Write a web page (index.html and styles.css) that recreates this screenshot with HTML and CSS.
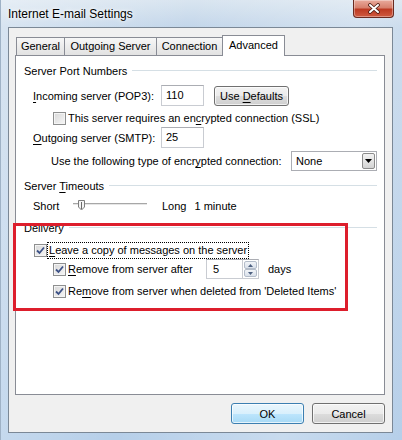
FILE: index.html
```html
<!DOCTYPE html>
<html lang="en">
<head>
    <meta charset="UTF-8">
    <title>Internet E-mail Settings</title>
    <link rel="stylesheet" href="styles.css">
</head>
<body>

    <div class="window">
        <!-- title bar -->
        <div class="titlebar">
            <span class="title">Internet E-mail Settings</span>
            <div class="close">
                <svg width="14" height="11" viewBox="0 0 14 11">
                    <path d="M3 2 L11 9 M11 2 L3 9" stroke="#4a1a12" stroke-width="3.6" stroke-linecap="round"/>
                    <path d="M3 2 L11 9 M11 2 L3 9" stroke="#fff" stroke-width="2" stroke-linecap="round"/>
                </svg>
            </div>
        </div>

        <div class="client">
            <div class="tabs">
                <div class="tab tab-general">General</div>
                <div class="tab tab-outgoing">Outgoing Server</div>
                <div class="tab tab-connection">Connection</div>
                <div class="tab tab-advanced active">Advanced</div>
            </div>

            <div class="pane">
                <!-- Server Port Numbers -->
                <div class="group group-ports"><span>Server Port Numbers</span></div>
                <div class="row row-incoming">
                    <span class="label"><u>I</u>ncoming server (POP3):</span>
                    <span class="field">110</span>
                    <span class="btn btn-small"><span>Use <u>D</u>efaults</span></span>
                </div>
                <div class="row row-ssl">
                    <span class="check"></span>
                    <span class="text">This server requires an en<u>c</u>rypted connection (SSL)</span>
                </div>
                <div class="row row-outgoing">
                    <span class="label"><u>O</u>utgoing server (SMTP):</span>
                    <span class="field">25</span>
                </div>
                <div class="row row-encrypt">
                    <span>Use the following type of encr<u>y</u>pted connection:</span>
                    <span class="select">
                        <span>None</span>
                        <span class="select-btn">
                            <svg width="7" height="4" viewBox="0 0 7 4"><path d="M0 0 H7 L3.5 4 Z" fill="#000"/></svg>
                        </span>
                    </span>
                </div>

                <!-- Server Timeouts -->
                <div class="group group-timeouts"><span>Server <u>T</u>imeouts</span></div>
                <div class="row row-timeout">
                    <span class="slider-label">Short</span>
                    <svg class="slider" width="74" height="14" viewBox="0 0 74 14">
                        <rect x="0" y="4" width="74" height="1" fill="#a7a7a7"/>
                        <rect x="0" y="5" width="74" height="1" fill="#e6e6e6"/>
                        <path d="M5.5 1.5 H11.5 V8 L8.5 11 L5.5 8 Z" fill="#f4f4f4" stroke="#7d7d7d"/>
                        <rect x="8" y="3" width="1" height="7" fill="#6b6b6b"/>
                    </svg>
                    <span class="long">Long</span>
                    <span class="minutes">1 minute</span>
                </div>

                <!-- Delivery -->
                <div class="group group-delivery"><span>Delivery</span></div>
                <div class="row row-leave">
                    <span class="check checked">
                        <svg width="9" height="9" viewBox="0 0 9 9"><path d="M1 4.5 L3.5 7 L8 1.5" stroke="#3c5186" stroke-width="1.8" fill="none"/></svg>
                    </span>
                    <span class="text focus"><u>L</u>eave a copy of messages on the server</span>
                </div>
                <div class="row row-remove">
                    <span class="check checked">
                        <svg width="9" height="9" viewBox="0 0 9 9"><path d="M1 4.5 L3.5 7 L8 1.5" stroke="#3c5186" stroke-width="1.8" fill="none"/></svg>
                    </span>
                    <span class="text remove-label"><u>R</u>emove from server after</span>
                    <span class="spin">
                        <span class="spin-field">5</span>
                        <span class="spin-btns">
                            <span class="spin-btn">
                                <svg width="5" height="3" viewBox="0 0 5 3"><path d="M0 3 H5 L2.5 0 Z" fill="#4d6080"/></svg>
                            </span>
                            <span class="spin-btn">
                                <svg width="5" height="3" viewBox="0 0 5 3"><path d="M0 0 H5 L2.5 3 Z" fill="#4d6080"/></svg>
                            </span>
                        </span>
                    </span>
                    <span class="days">days</span>
                </div>
                <div class="row row-deleted">
                    <span class="check checked">
                        <svg width="9" height="9" viewBox="0 0 9 9"><path d="M1 4.5 L3.5 7 L8 1.5" stroke="#3c5186" stroke-width="1.8" fill="none"/></svg>
                    </span>
                    <span class="text">Re<u>m</u>ove from server when deleted from 'Deleted Items'</span>
                </div>
            </div>

            <div class="actions">
                <span class="btn btn-default">OK</span>
                <span class="btn">Cancel</span>
            </div>
        </div>

        <!-- red highlight drawn over the dialog -->
        <div class="highlight"></div>
    </div>

</body>
</html>
```

FILE: styles.css
```css
* {
    box-sizing: border-box;
}
body {
    margin: 0;
    width: 402px;
    height: 440px;
    overflow: hidden;
    font-family: "Segoe UI", "Liberation Sans", sans-serif;
    font-size: 11px;
    color: #000;
    background: #b9d1ea;
}
u {
    text-decoration-thickness: 1px;
    text-underline-offset: 2px;
}

/* window frame */
.window {
    position: relative;
    height: 440px;
    display: flex;
    flex-direction: column;
    border-left: 1px solid #9fb2c6;
    background:
        linear-gradient(100deg, rgba(255,255,255,0.35) 0, rgba(255,255,255,0) 40%, rgba(255,255,255,0.25) 75%, rgba(255,255,255,0) 100%),
        linear-gradient(#d9e5f0 0, #c3d6ea 27px, #b6cfe9 100%);
}
.titlebar {
    height: 27px;
    display: flex;
    align-items: flex-start;
    justify-content: space-between;
    padding: 0 8px 0 7px;
}
.title {
    margin-top: 6px;
    font-size: 12px;
    line-height: 16px;
    text-shadow: 0 0 6px #fff, 0 0 3px #fff;
}
.close {
    width: 41px;
    height: 18px;
    border: 1px solid #6a2a20;
    border-top: none;
    border-radius: 0 0 4px 4px;
    background: linear-gradient(#e9aa9c, #d7806d 45%, #bd3a22 55%, #cf5a40);
    box-shadow: inset 0 0 0 1px rgba(255,255,255,0.35);
    display: flex;
    align-items: center;
    justify-content: center;
}

/* client area */
.client {
    flex: 1;
    margin: 0 9px 7px 7px;
    background: #f0f0f0;
    border: 1px solid #7b8896;
    padding: 7px 7px 8px 6px;
    display: flex;
    flex-direction: column;
}

/* tabs */
.tabs {
    display: flex;
    align-items: flex-end;
    height: 20px;
    padding-left: 2px;
}
.tab {
    height: 18px;
    margin-left: -1px;
    border: 1px solid #898c95;
    border-bottom: none;
    background: linear-gradient(#f7f7f7, #ececec 50%, #e2e2e2);
    text-align: center;
    line-height: 17px;
}
.tab-general { width: 49px; }
.tab-outgoing { width: 93px; }
.tab-connection { width: 67px; }
.tab-advanced { width: 63px; }
.tab.active {
    position: relative;
    z-index: 1;
    height: 21px;
    margin-bottom: -1px;
    background: #fff;
    line-height: 18px;
}

/* tab page */
.pane {
    flex: 1;
    background: #fff;
    border: 1px solid #898c95;
    padding: 0 7px 0 8px;
    display: flex;
    flex-direction: column;
}
.group {
    display: flex;
    align-items: center;
    height: 14px;
    line-height: 14px;
    white-space: nowrap;
}
.group::after {
    content: "";
    flex: 1;
    margin-left: 5px;
    margin-top: -1px;
    border-top: 1px solid #d5dfe5;
}
.group-ports { margin-top: 8px; }
.group-timeouts { margin-top: 8px; }
.group-delivery { margin-top: 8px; }

.row {
    display: flex;
    align-items: center;
    line-height: 14px;
    white-space: nowrap;
}
.row-incoming { margin-top: 7px; height: 21px; padding-left: 9px; }
.row-ssl { margin-top: 5px; height: 14px; padding-left: 29px; }
.row-outgoing { margin-top: 2px; height: 21px; padding-left: 9px; }
.row-encrypt { margin-top: 3px; height: 20px; padding-left: 27px; }
.row-timeout { margin-top: 6px; height: 14px; padding-left: 9px; }
.row-leave { margin-top: 8px; height: 15px; padding-left: 10px; }
.row-remove { margin-top: 1px; height: 20px; padding-left: 29px; }
.row-deleted { margin-top: 5px; height: 14px; padding-left: 29px; }

.label {
    width: 128px;
}
.field {
    width: 43px;
    height: 21px;
    border: 1px solid #c9ccd2;
    border-top-color: #abadb3;
    background: #fff;
    padding-left: 4px;
    line-height: 19px;
}

/* push buttons */
.btn {
    display: flex;
    align-items: center;
    justify-content: center;
    width: 73px;
    height: 21px;
    border: 1px solid #707070;
    border-radius: 3px;
    background: linear-gradient(#f2f2f2, #ebebeb 50%, #dddddd 50%, #cfcfcf);
    box-shadow: inset 0 0 0 1px rgba(255,255,255,0.7);
    white-space: nowrap;
}
.btn-small {
    width: 75px;
    height: 20px;
    margin-left: 10px;
}
.btn-default {
    border-color: #3c7fb1;
    background: linear-gradient(#eaf6fd, #d9f0fc 50%, #bee6fd 50%, #a7d9f5);
}

/* check boxes */
.check {
    flex: none;
    width: 13px;
    height: 13px;
    border: 1px solid #8e8f8f;
    background: linear-gradient(135deg, #d8d8d8, #f6f6f6);
    box-shadow: inset 0 0 0 1px #f4f4f4;
    display: flex;
    align-items: center;
    justify-content: center;
}
.check + .text {
    margin-left: 2px;
}
.row-leave .check + .text {
    margin-left: 1px;
}
.focus {
    padding: 0 1px;
    outline: 1px dotted #000;
    outline-offset: 0;
    line-height: 15px;
}

/* combo box */
.select {
    margin-left: auto;
    width: 86px;
    height: 20px;
    border: 1px solid #abadb3;
    background: #fff;
    display: flex;
    align-items: center;
    padding-left: 4px;
}
.select-btn {
    margin-left: auto;
    margin-right: 1px;
    width: 13px;
    height: 16px;
    border: 1px solid #8b8b8b;
    border-radius: 2px;
    background: linear-gradient(#f2f2f2, #e4e4e4 50%, #d3d3d3);
    display: flex;
    align-items: center;
    justify-content: center;
}

/* timeout slider */
.slider-label {
    width: 40px;
}
.long {
    margin-left: 15px;
}
.minutes {
    margin-left: 8px;
}

/* spinner */
.remove-label {
    width: 138px;
}
.spin {
    display: flex;
    height: 20px;
}
.spin-field {
    width: 36px;
    border: 1px solid #c9ccd2;
    border-top-color: #abadb3;
    border-right: none;
    padding-left: 6px;
    line-height: 18px;
}
.spin-btns {
    width: 17px;
    display: flex;
    flex-direction: column;
    border: 1px solid #c9ccd2;
    border-top-color: #abadb3;
    background: #fff;
    padding: 1px;
}
.spin-btn {
    flex: 1;
    border: 1px solid #b3bcc9;
    border-radius: 2px;
    background: linear-gradient(#f1f4f8, #d9e0ea);
    display: flex;
    align-items: center;
    justify-content: center;
}
.days {
    margin-left: 9px;
}

/* bottom buttons */
.actions {
    display: flex;
    justify-content: flex-end;
    gap: 8px;
    margin-top: 8px;
}

/* red annotation box */
.highlight {
    position: absolute;
    left: 12px;
    top: 223px;
    width: 335px;
    height: 88px;
    border: 3px solid #dd1e2c;
}
```
